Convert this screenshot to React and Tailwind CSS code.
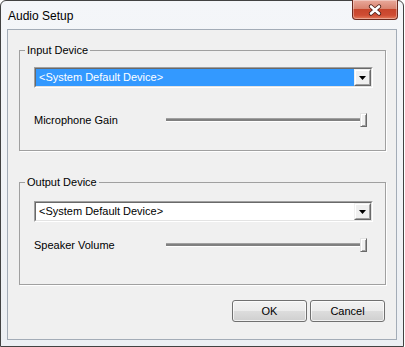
import React from 'react';

const ui = "font-['Liberation_Sans',Arial,sans-serif]";

const DropButton = () => (
  <div className="h-full w-[17px] border border-t-[#f0f0f0] border-l-[#f0f0f0] border-r-[#696969] border-b-[#696969]">
    <div className="flex h-full w-full items-center justify-center border border-t-white border-l-white border-r-[#a0a0a0] border-b-[#a0a0a0] bg-[#f0f0f0]">
      <svg width="7" height="4" viewBox="0 0 7 4">
        <path d="M0 0H7L3.5 4Z" fill="#000" />
      </svg>
    </div>
  </div>
);

const Combo = ({ value, selected }) => (
  <div className="flex h-[21px] w-[339px] border border-t-[#a0a0a0] border-l-[#a0a0a0] border-r-white border-b-white">
    <div className="flex flex-1 border border-t-[#696969] border-l-[#696969] border-r-[#e3e3e3] border-b-[#e3e3e3] bg-white">
      <div
        className={`flex flex-1 items-center pl-[3px] text-[11px] leading-[13px] ${
          selected ? 'bg-[#3399ff] text-white' : 'text-black'
        }`}
      >
        {value}
      </div>
      <DropButton />
    </div>
  </div>
);

const Slider = () => (
  <div className="flex w-[201px] items-center">
    <div className="h-[4px] flex-1 border-t border-b border-t-[#a0a0a0] border-b-white bg-[#808080]" />
    <div className="-ml-[3px] h-[14px] w-[7px] border border-t-[#e3e3e3] border-l-[#e3e3e3] border-r-[#696969] border-b-[#696969] bg-[#f0f0f0] shadow-[inset_1px_1px_0_#fff,inset_-1px_-1px_0_#a0a0a0]" />
  </div>
);

const Group = ({ title, className, children }) => (
  <fieldset
    className={`ml-[11px] w-[367px] border border-[#a0a0a0] shadow-[1px_1px_0_#fff] ${className}`}
  >
    <legend className="ml-[5px] px-[2px] text-[11px] leading-[13px] text-black">{title}</legend>
    {children}
  </fieldset>
);

const Button = ({ children }) => (
  <button className="flex h-[22px] w-[75px] items-center justify-center rounded-[3px] border border-[#707070] bg-[linear-gradient(#f2f2f2_0%,#ebebeb_50%,#dddddd_50%,#cfcfcf_100%)] text-[11px] leading-[13px] text-black shadow-[inset_0_0_0_1px_rgba(255,255,255,0.7)]">
    {children}
  </button>
);

export default function App() {
  return (
    <div className={`h-[347px] w-[405px] bg-white ${ui}`}>
      <div className="flex h-[347px] w-[404px] flex-col rounded-t-[6px] border border-[#424242] bg-[linear-gradient(#f4f6f9,#eceff3)]">
        {/* Title bar */}
        <div className="flex h-[28px] items-start justify-between pl-[7px]">
          <span className="mt-[8px] text-[12px] leading-[14px] text-black">Audio Setup</span>
          <div className="-mt-px mr-[5px] flex h-[20px] w-[46px] items-center justify-center rounded-b-[4px] border border-t-0 border-[#6b2a1e] bg-[linear-gradient(#e9a99b_0%,#d98470_45%,#c7452b_50%,#cf4c33_80%,#e47b5b_100%)] shadow-[inset_0_0_0_1px_rgba(255,255,255,0.35)]">
            <svg width="16" height="12" viewBox="0 0 16 12">
              <path d="M4 2.5L12 9.5M12 2.5L4 9.5" stroke="#4a1f17" strokeWidth="4.2" strokeLinecap="round" />
              <path d="M4 2.5L12 9.5M12 2.5L4 9.5" stroke="#ffffff" strokeWidth="2.6" strokeLinecap="round" />
            </svg>
          </div>
        </div>

        {/* Client area */}
        <div className="mx-[6px] mb-[6px] flex flex-1 flex-col border border-[#a3acb7] bg-[#f0f0f0]">
          <Group title="Input Device" className="mt-[14px]">
            <div className="pl-[14px] pb-[23px]">
              <div className="mt-[10px]">
                <Combo value="<System Default Device>" selected />
              </div>
              <div className="mt-[25px] flex h-[14px] items-center">
                <span className="w-[132px] text-[11px] leading-[13px] text-black">Microphone Gain</span>
                <Slider />
              </div>
            </div>
          </Group>

          <Group title="Output Device" className="mt-[25px]">
            <div className="pl-[14px] pb-[32px]">
              <div className="mt-[12px]">
                <Combo value="<System Default Device>" />
              </div>
              <div className="mt-[16px] flex h-[14px] items-center">
                <span className="w-[132px] text-[11px] leading-[13px] text-black">Speaker Volume</span>
                <Slider />
              </div>
            </div>
          </Group>

          <div className="mr-[11px] mt-[15px] flex justify-end gap-[3px]">
            <Button>OK</Button>
            <Button>Cancel</Button>
          </div>
        </div>
      </div>
    </div>
  );
}
